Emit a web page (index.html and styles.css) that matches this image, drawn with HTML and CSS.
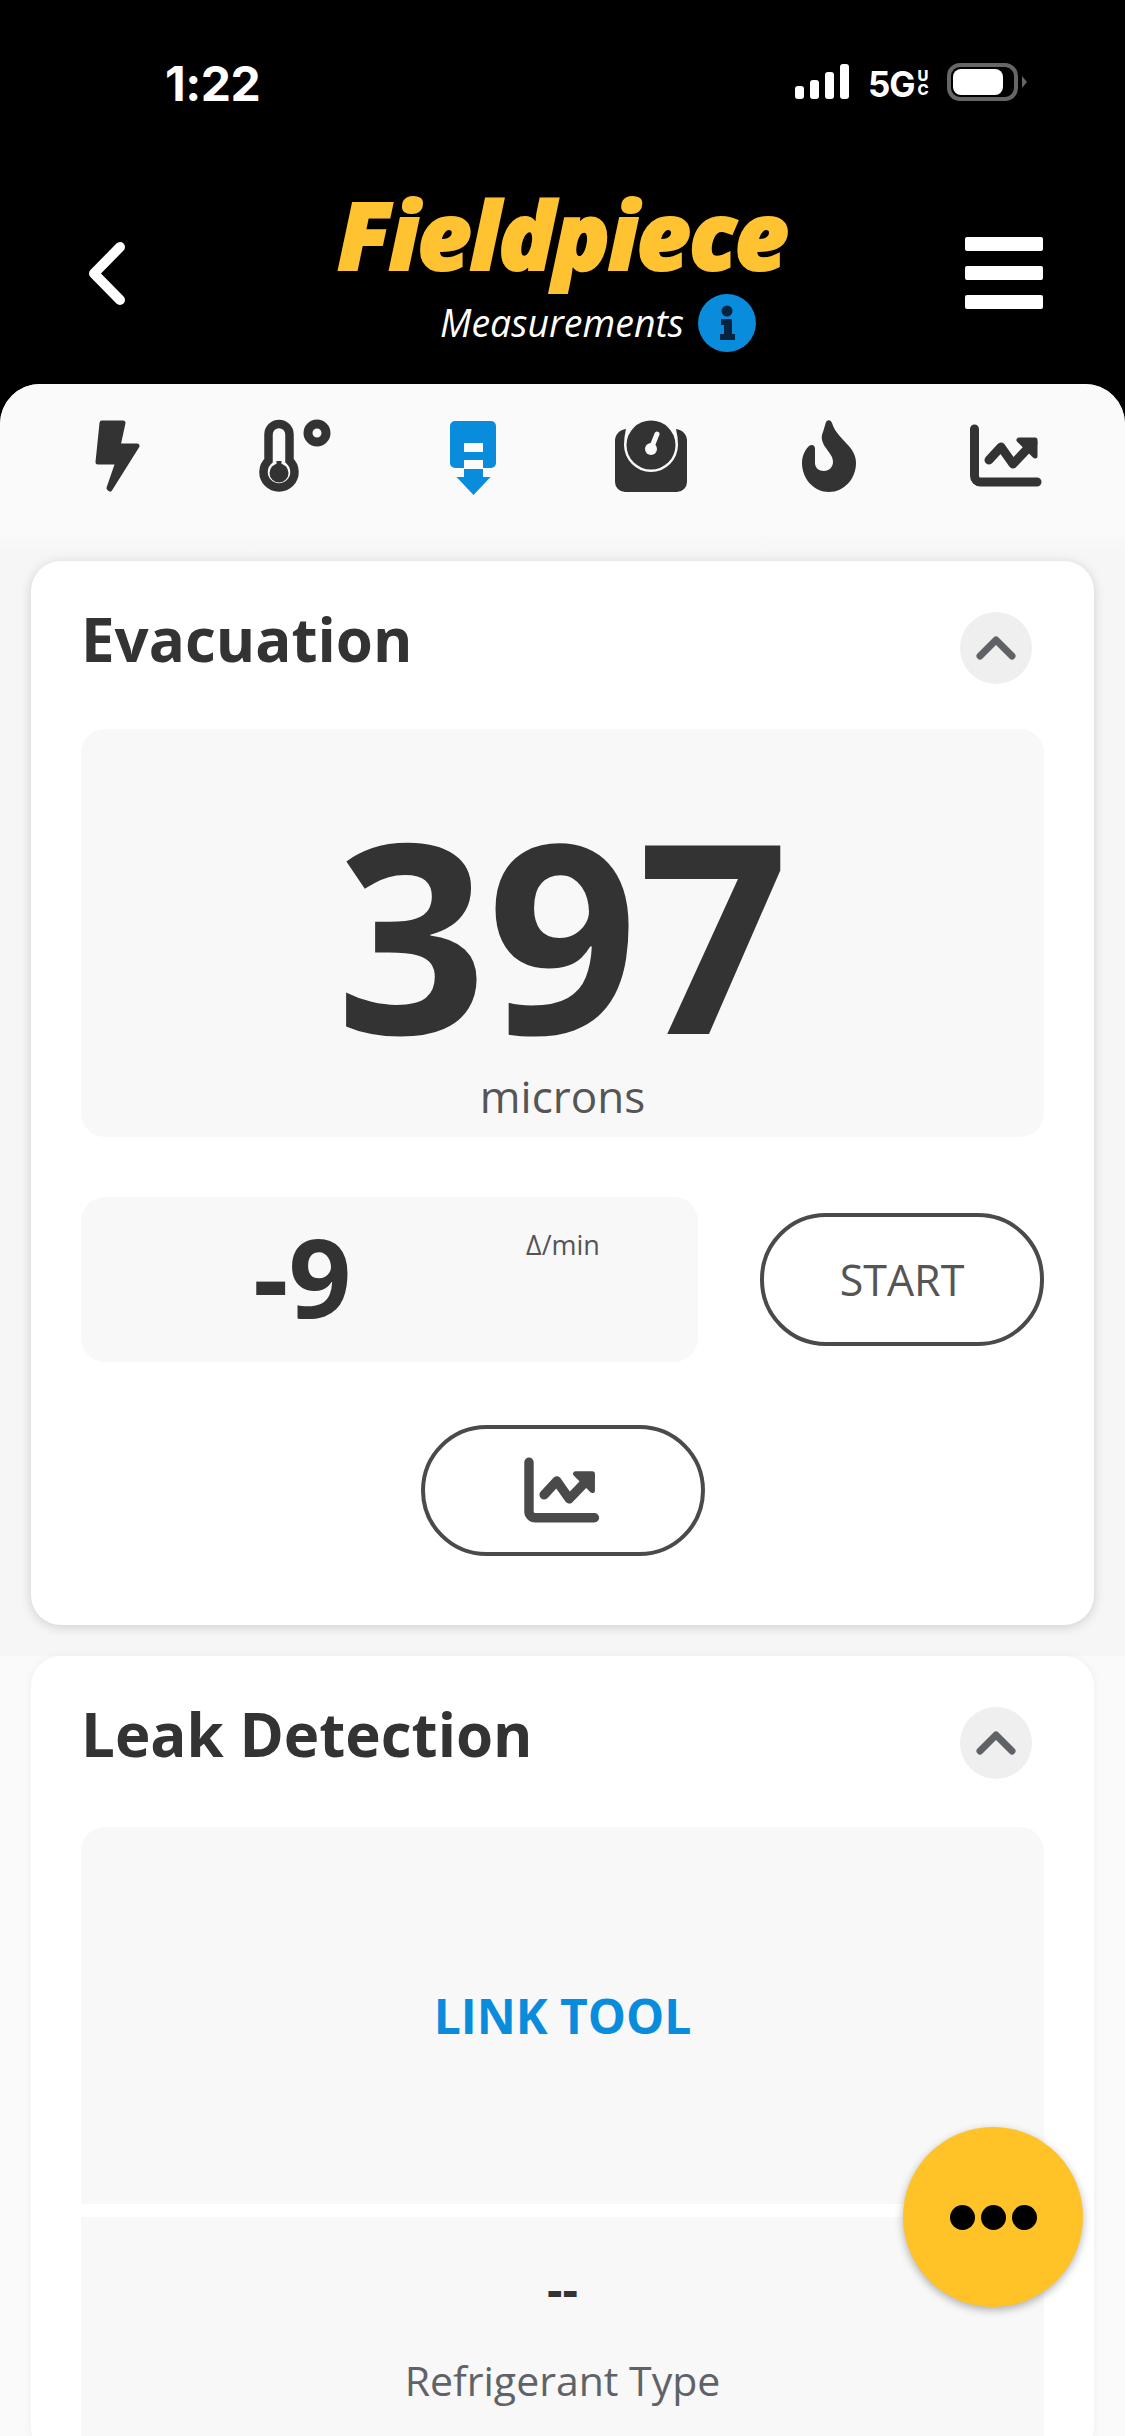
FILE: index.html
```html
<!DOCTYPE html>
<html lang="en">

<head>
    <meta charset="utf-8" />
    <title>Fieldpiece Measurements</title>
    <link rel="stylesheet" href="styles.css">
</head>

<body>
    <div class="screen">
        <div class="header">
            <div class="statusbar">
                <span class="clock">1:22</span>
                <div class="status-icons">
                    <div class="signal"><i class="b1"></i><i class="b2"></i><i class="b3"></i><i class="b4"></i></div>
                    <span class="net">5G</span>
                    <span class="net-uc">U<br />C</span>
                    <svg class="battery" width="80" height="38" viewBox="0 0 80 38">
                        <rect x="2" y="2" width="67" height="34" rx="11" fill="none" stroke="#666" stroke-width="4" />
                        <rect x="6" y="6" width="50" height="26" rx="8" fill="#fff" />
                        <path d="M75 13l5 6-5 6z" fill="#666" />
                    </svg>
                </div>
            </div>
            <div class="titlebar">
                <svg class="back" width="37" height="63" viewBox="0 0 37 63">
                    <path d="M32 5L6 31.500 32 58" fill="none" stroke="#fff" stroke-width="10" stroke-linecap="round" stroke-linejoin="round" />
                </svg>
                <div class="brand">
                    <div class="logo">Fieldpiece</div>
                    <div class="subtitle">
                        <span>Measurements</span>
                        <svg width="58" height="58" viewBox="0 0 58 58">
                            <circle cx="29" cy="29" r="29" fill="#0a8cdc" />
                            <circle cx="29" cy="17" r="5.500" fill="#06243f" />
                            <path d="M23 25h11v15h3v6H22v-6h4v-9h-3z" fill="#06243f" />
                        </svg>
                    </div>
                </div>
                <div class="burger"><i></i><i></i><i></i></div>
            </div>
        </div>

        <div class="sheet">
            <div class="tabs">
                <svg viewBox="77 416 80 80">
                    <path d="M102 423h21l-5 23h19l-27 43-1-1 9-26H98z" fill="#333" stroke="#333" stroke-width="5" stroke-linejoin="round" />
                </svg>
                <svg viewBox="255 416 80 80">
                    <path d="M268.500 460.600V434.500a10.500 10.500 0 0 1 21 0V460.600a15.500 15.500 0 1 1-21 0z" fill="none" stroke="#333" stroke-width="8.500" />
                    <circle cx="279" cy="473" r="9.500" fill="#333" />
                    <rect x="276.500" y="461" width="5" height="9" fill="#333" />
                    <circle cx="317" cy="433" r="9" fill="none" stroke="#333" stroke-width="9" />
                </svg>
                <svg viewBox="434 416 80 80">
                    <path d="M456 421h36a5 5 0 0 1 5 5v37a5 5 0 0 1-5 5h-8v-8h-19v8h-9a5 5 0 0 1-5-5v-37a5 5 0 0 1 5-5z" fill="#0a8cdc" />
                    <path d="M465 469h19v8h7.500l-17 18-17-18H465z" fill="#0a8cdc" />
                    <rect x="465" y="443" width="19" height="9" fill="#fafafa" />
                </svg>
                <svg viewBox="612 416 80 80">
                    <path d="M616 441a12 12 0 0 1 11-12q-2 8-2 16a27 27 0 0 0 54 0q0-8-2-16a12 12 0 0 1 11 12v41a10 10 0 0 1-10 10h-52a10 10 0 0 1-10-10z" fill="#333" />
                    <circle cx="652" cy="445" r="24.500" fill="#333" />
                    <path d="M658 434l-6 15" stroke="#fafafa" stroke-width="5" stroke-linecap="round" />
                    <circle cx="652" cy="449" r="6" fill="#fafafa" />
                </svg>
                <svg viewBox="789 416 80 80">
                    <path d="M826 422c2-3 5-2 6 1 3 9 8 13 14 20 6 6 10 12 10 20 0 16-12 29-27 29s-27-13-27-29c0-7 3-13 7-17 3-2 6-1 6 3v14c0 5 4 8 9 8s9-4 9-9c0-6-4-9-7-14-3-4-6-10-3-16z" fill="#333" />
                </svg>
                <svg viewBox="967 416 80 80">
                    <path d="M974.500 429v47a6 6 0 0 0 6 6h56.500" fill="none" stroke="#333" stroke-width="9" stroke-linecap="round" />
                    <path d="M989 460l12-13 12 17 20-21" fill="none" stroke="#333" stroke-width="9" stroke-linecap="round" stroke-linejoin="round" />
                    <path d="M1019 440h16v16z" fill="#333" stroke="#333" stroke-width="5" stroke-linejoin="round" />
                </svg>
            </div>

            <div class="section">
                <div class="card">
                    <div class="card-head">
                        <h2>Evacuation</h2>
                        <div class="toggle">
                            <svg width="40" height="24" viewBox="0 0 40 24"><path d="M4 20L20 4l16 16" fill="none" stroke="#5f6368" stroke-width="7" stroke-linecap="round" stroke-linejoin="round" /></svg>
                        </div>
                    </div>
                    <div class="panel reading">
                        <div class="reading-value">397</div>
                        <div class="reading-unit">microns</div>
                    </div>
                    <div class="rate-row">
                        <div class="panel rate">
                            <span class="rate-value">-9</span>
                            <span class="rate-unit">Δ/min</span>
                        </div>
                        <div class="pill">START</div>
                    </div>
                    <div class="pill pill-graph">
                        <svg width="84" height="67" viewBox="967 424 80 64">
                            <path d="M974.500 429v47a6 6 0 0 0 6 6h56.500" fill="none" stroke="#4a4a4a" stroke-width="9" stroke-linecap="round" />
                            <path d="M989 460l12-13 12 17 20-21" fill="none" stroke="#4a4a4a" stroke-width="9" stroke-linecap="round" stroke-linejoin="round" />
                            <path d="M1019 440h16v16z" fill="#4a4a4a" stroke="#4a4a4a" stroke-width="5" stroke-linejoin="round" />
                        </svg>
                    </div>
                </div>
            </div>

            <div class="section section-leak">
                <div class="card card-leak">
                    <div class="card-head">
                        <h2>Leak Detection</h2>
                        <div class="toggle">
                            <svg width="40" height="24" viewBox="0 0 40 24"><path d="M4 20L20 4l16 16" fill="none" stroke="#5f6368" stroke-width="7" stroke-linecap="round" stroke-linejoin="round" /></svg>
                        </div>
                    </div>
                    <div class="panel link-panel">LINK TOOL</div>
                    <div class="panel refrigerant">
                        <div class="refrigerant-value">--</div>
                        <div class="refrigerant-label">Refrigerant Type</div>
                    </div>
                </div>
            </div>
        </div>

        <div class="fab"><i></i><i></i><i></i></div>
    </div>
</body>

</html>
```

FILE: styles.css
```css
* {
    margin: 0;
    padding: 0;
    box-sizing: border-box;
}

body {
    background: #000;
    font-family: "Open Sans", "Liberation Sans", sans-serif;
    color: #333;
}

.screen {
    position: relative;
    width: 1125px;
    height: 2436px;
    overflow: hidden;
    background: #000;
}

/* header */
.header {
    height: 384px;
}

.statusbar {
    height: 170px;
    padding: 56px 0 0 165px;
    display: flex;
    align-items: flex-start;
    justify-content: space-between;
    color: #fff;
}

.clock {
    font-family: Inter, "Liberation Sans", sans-serif;
    font-size: 48px;
    font-weight: 700;
    line-height: 56px;
    letter-spacing: -.5px;
}

.status-icons {
    display: flex;
    align-items: flex-start;
    padding: 8px 98px 0 0;
}

.signal {
    display: flex;
    align-items: flex-end;
    gap: 6px;
    height: 35px;
    margin-right: 19px;
}

.signal i {
    width: 9px;
    background: #fff;
    border-radius: 3px;
}

.signal .b1 { height: 13px; }
.signal .b2 { height: 19px; }
.signal .b3 { height: 27px; }
.signal .b4 { height: 35px; }

.net {
    width: 49px;
    font-family: Inter, "Liberation Sans", sans-serif;
    font-size: 35px;
    font-weight: 700;
    line-height: 40px;
    letter-spacing: -1px;
}

.net-uc {
    width: 12px;
    font-family: Inter, "Liberation Sans", sans-serif;
    font-size: 15px;
    font-weight: 800;
    line-height: 14px;
    text-align: center;
    margin: 5px 18px 0 0;
}

.battery {
    margin-top: -1px;
}

.titlebar {
    display: flex;
    align-items: flex-start;
    position: relative;
    padding-left: 88px;
}

.back {
    margin-top: 72px;
}

.brand {
    width: 840px;
}

.logo {
    font-size: 94px;
    font-weight: 800;
    font-style: italic;
    line-height: 100px;
    letter-spacing: -2px;
    color: #ffc332;
    -webkit-text-stroke: 2px #ffc332;
    text-align: center;
    margin: 14px 0 0 34px;
}

.subtitle {
    display: flex;
    align-items: center;
    gap: 14px;
    padding-left: 315px;
    margin-top: 10px;
    color: #fff;
    font-size: 37.500px;
    font-style: italic;
    line-height: 58px;
}

.burger {
    display: flex;
    flex-direction: column;
    gap: 15px;
    margin-top: 67px;
}

.burger i {
    display: block;
    width: 78px;
    height: 14px;
    background: #fff;
    border-radius: 2px;
}

/* sheet */
.sheet {
    height: 2052px;
    background: #fafafa;
    border-radius: 40px 40px 0 0;
    overflow: hidden;
}

.tabs {
    height: 147px;
    padding: 32px 28px 0;
    display: grid;
    grid-template-columns: repeat(6, 178px);
    justify-items: center;
    align-items: start;
    background: #fafafa;
}

.tabs svg {
    width: 80px;
    height: 80px;
}

.section {
    background: linear-gradient(#fafafa, #f6f6f6 24px);
    padding: 30px 31px 31px;
}

.section-leak {
    background: #fafafa;
    padding-top: 0;
}

.card {
    background: #fff;
    border-radius: 30px;
    padding: 0 50px 69px;
    box-shadow: 0 2px 12px rgba(0, 0, 0, .16);
}

.card-leak {
    box-shadow: 0 0 8px rgba(0, 0, 0, .05);
    padding-bottom: 0;
}

.card-head {
    height: 168px;
    display: flex;
    justify-content: space-between;
    align-items: flex-start;
}

.card-leak .card-head {
    height: 171px;
}

.card-head h2 {
    font-size: 60px;
    font-weight: 700;
    line-height: 80px;
    margin-top: 38px;
}

.toggle {
    width: 72px;
    height: 72px;
    margin: 51px 12px 0 0;
    border-radius: 50%;
    background: #efefef;
    display: flex;
    align-items: center;
    justify-content: center;
}

.panel {
    background: #f8f8f8;
    border-radius: 24px;
}

/* evacuation */
.reading {
    height: 408px;
    padding-top: 71px;
    text-align: center;
}

.reading-value {
    font-size: 264px;
    font-weight: 700;
    line-height: 264px;
}

.reading-unit {
    font-size: 44px;
    font-weight: 500;
    line-height: 60px;
    margin-top: 2px;
    color: #555;
}

.rate-row {
    display: flex;
    align-items: center;
    justify-content: space-between;
    margin-top: 60px;
}

.rate {
    width: 617px;
    height: 165px;
    display: flex;
    align-items: flex-start;
    padding-left: 172px;
}

.rate-value {
    font-size: 110px;
    font-weight: 700;
    line-height: 156px;
    width: 273px;
}

.rate-unit {
    font-size: 27px;
    line-height: 36px;
    margin-top: 30px;
    color: #555;
}

.pill {
    width: 284px;
    height: 133px;
    border: 4px solid #4a4a4a;
    border-radius: 66px;
    display: flex;
    align-items: center;
    justify-content: center;
    font-size: 43px;
    font-weight: 500;
    color: #555;
}

.pill-graph {
    height: 131px;
    margin: 63px auto 0;
}

/* leak detection */
.link-panel {
    height: 377px;
    border-radius: 24px 24px 0 0;
    display: flex;
    align-items: center;
    justify-content: center;
    font-size: 48px;
    font-weight: 700;
    color: #0a8cdc;
}

.refrigerant {
    height: 240px;
    margin-top: 13px;
    border-radius: 0;
    padding-top: 47px;
    text-align: center;
}

.refrigerant-value {
    font-size: 48px;
    font-weight: 700;
    line-height: 50px;
}

.refrigerant-label {
    font-size: 41px;
    font-weight: 500;
    line-height: 56px;
    margin-top: 38px;
    color: #5f6368;
}

/* floating button */
.fab {
    position: absolute;
    left: 903px;
    top: 2127px;
    width: 180px;
    height: 180px;
    border-radius: 50%;
    background: #ffc328;
    box-shadow: 0 3px 8px rgba(0, 0, 0, .3);
    display: flex;
    align-items: center;
    justify-content: center;
    gap: 6px;
}

.fab i {
    width: 25px;
    height: 25px;
    border-radius: 50%;
    background: #000;
}
```
